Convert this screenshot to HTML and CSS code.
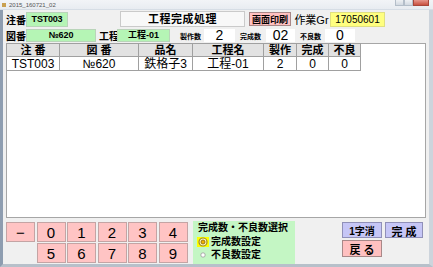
FILE: index.html
```html
<!DOCTYPE html>
<html lang="ja">
<head>
  <meta charset="UTF-8">
  <title>工程完成処理</title>
  <link rel="stylesheet" href="styles.css">
</head>
<body>
<div class="window">
  <div class="titlebar">
    <span class="appicon"></span>
    <span class="caption">2015_160721_02</span>
    <div class="controls">
      <span class="ctl"></span><span class="ctl"></span><span class="ctl close"></span>
    </div>
  </div>

  <div class="main">
    <div class="row row-top">
      <span class="lbl lbl-first">注番</span>
      <span class="box green order">TST003</span>
      <span class="heading">工程完成処理</span>
      <button class="btn pink print">画面印刷</button>
      <span class="lbl group">作業Gr</span>
      <span class="box yellow">17050601</span>
    </div>

    <div class="row row-sub">
      <span class="lbl lbl-first">図番</span>
      <span class="box green drawing">№620</span>
      <span class="lbl lbl-proc">工程</span>
      <span class="box green proc">工程-01</span>
      <span class="lbl small made">製作数</span>
      <span class="num n-made">2</span>
      <span class="lbl small done">完成数</span>
      <span class="num n-done">02</span>
      <span class="lbl small bad">不良数</span>
      <span class="num n-bad">0</span>
    </div>

    <div class="grid">
      <table>
        <colgroup>
          <col class="c1"><col class="c2"><col class="c3"><col class="c4">
          <col class="c5"><col class="c6"><col class="c7">
        </colgroup>
        <tr>
          <th>注 番</th><th>図 番</th><th>品名</th><th>工程名</th><th>製作</th><th>完成</th><th>不良</th>
        </tr>
        <tr>
          <td>TST003</td><td>№620</td><td>鉄格子3</td><td>工程-01</td><td>2</td><td>0</td><td>0</td>
        </tr>
      </table>
    </div>

    <div class="bottom">
      <div class="keypad">
        <button class="key">−</button>
        <button class="key">0</button>
        <button class="key">1</button>
        <button class="key">2</button>
        <button class="key">3</button>
        <button class="key">4</button>
        <span class="blank"></span>
        <button class="key">5</button>
        <button class="key">6</button>
        <button class="key">7</button>
        <button class="key">8</button>
        <button class="key">9</button>
      </div>

      <div class="choice">
        <div class="choice-title">完成数・不良数選択</div>
        <label class="opt">
          <span class="radio on"><svg width="10" height="10" viewBox="0 0 10 10"><circle cx="5" cy="5" r="4" fill="#fff8c0" stroke="#a08a20" stroke-width="1.2"/><circle cx="5" cy="5" r="2" fill="#f0b000" stroke="#806010" stroke-width="0.8"/></svg></span>
          完成数設定
        </label>
        <label class="opt">
          <span class="radio"><svg width="6" height="6" viewBox="0 0 6 6"><circle cx="3" cy="3" r="2.2" fill="#fff" stroke="#9a9a9a" stroke-width="0.8"/></svg></span>
          不良数設定
        </label>
      </div>

      <div class="actions">
        <button class="btn violet">1字消</button>
        <button class="btn violet wide">完 成</button>
        <button class="btn pink wide">戻 る</button>
      </div>
    </div>
  </div>
</div>
</body>
</html>
```

FILE: styles.css
```css
* {
  box-sizing: border-box;
}

html, body {
  margin: 0;
  padding: 0;
}

body {
  width: 433px;
  height: 267px;
  overflow: hidden;
  font-family: "Liberation Sans", "DejaVu Sans", "Noto Sans CJK JP", sans-serif;
  background: #f0f0f0;
  color: #000;
}

.window {
  width: 433px;
  height: 267px;
  display: flex;
  flex-direction: column;
}

/* title bar */
.titlebar {
  height: 10px;
  display: flex;
  align-items: center;
  background: linear-gradient(to bottom, #f2f4f7, #e8ecf1);
  border-bottom: 1px solid #d6dde5;
  padding-left: 2px;
}

.appicon {
  width: 4px;
  height: 4px;
  background: #c9a050;
  margin-right: 3px;
}

.caption {
  font-size: 6px;
  color: #555;
  line-height: 8px;
}

.controls {
  margin-left: auto;
  display: flex;
  align-self: flex-start;
  margin-right: 4px;
}

.ctl {
  width: 9px;
  height: 6px;
  background: linear-gradient(#eef1f4, #d2d9e1);
  border: 1px solid #b4bec9;
  border-top: none;
}

.ctl.close {
  width: 16px;
  background: linear-gradient(#e6968c, #c8503f);
  border-color: #a8463a;
}

/* main area */
.main {
  flex: 1;
  display: flex;
  flex-direction: column;
  border-left: 3px solid #8e9db0;
  border-right: 4px solid #cdd4dc;
  border-bottom: 3px solid #b7c0ca;
  padding: 1px 2px 0 3px;
}

.row {
  display: flex;
  align-items: center;
}

.row-top {
  height: 16px;
}

.row-sub {
  height: 13px;
  margin-top: 2px;
}

.lbl {
  font-weight: bold;
  font-size: 10px;
  white-space: nowrap;
}

.lbl-first {
  width: 20px;
}

.box {
  height: 15px;
  line-height: 13px;
  text-align: center;
  font-size: 9px;
  font-weight: bold;
  border: 1px solid #b9d4b9;
}

.green {
  background: #b5f5b5;
}

.yellow {
  background: #ffff80;
  border-color: #e0e080;
  width: 55px;
  font-weight: normal;
  font-size: 10px;
}

.order {
  width: 42px;
  letter-spacing: -0.2px;
}

.heading {
  margin-left: 52px;
  width: 125px;
  height: 16px;
  line-height: 14px;
  background: #f8f8f8;
  border: 1px solid #cacaca;
  text-align: center;
  font-size: 11px;
  font-weight: bold;
  letter-spacing: 0.5px;
}

.btn {
  font-family: inherit;
  font-weight: bold;
  padding: 0;
  color: #000;
  cursor: pointer;
}

.pink {
  background: #ffc0c0;
  border: 1px solid #a88888;
}

.violet {
  background: #c6c6f6;
  border: 1px solid #9090b8;
}

.print {
  margin-left: 4px;
  width: 42px;
  height: 14px;
  font-size: 9px;
}

.group {
  width: 37px;
  margin-left: 2px;
  text-align: center;
  font-size: 11px;
  font-weight: normal;
}

.row-sub .box {
  height: 13px;
  line-height: 11px;
}

.drawing {
  width: 70px;
}

.lbl-proc {
  width: 21px;
  padding-left: 3px;
}

.proc {
  width: 53px;
}

.small {
  font-size: 7px;
  width: 22px;
}

.made {
  margin-left: 10px;
}

.done,
.bad {
  margin-left: 5px;
}

.num {
  height: 13px;
  line-height: 13px;
  background: #fff;
  text-align: center;
  font-size: 14px;
}

.n-made {
  width: 31px;
  margin-left: 2px;
}

.n-done {
  width: 29px;
  margin-left: 4px;
}

.n-bad {
  width: 30px;
  margin-left: 3px;
}

/* result grid */
.grid {
  flex: 1;
  margin-top: 1px;
  background: #fff;
  border: 1px solid #a6a6a6;
  margin-right: 1px;
}

.grid table {
  border-collapse: collapse;
  table-layout: fixed;
  margin: -1px 0 0 -1px;
}

.c1 { width: 53px; }
.c2 { width: 79px; }
.c3 { width: 54px; }
.c4 { width: 71px; }
.c5 { width: 33px; }
.c6 { width: 32px; }
.c7 { width: 32px; }

.grid th,
.grid td {
  border: 1px solid #a0a0a0;
  padding: 0;
  text-align: center;
  white-space: nowrap;
}

.grid th {
  height: 13px;
  line-height: 11px;
  background: #e2e2e2;
  font-size: 11px;
  font-weight: bold;
}

.grid td {
  height: 14px;
  line-height: 12px;
  font-size: 12px;
}

/* bottom panel */
.bottom {
  height: 46px;
  display: flex;
  align-items: flex-start;
  padding-top: 4px;
}

.keypad {
  display: grid;
  grid-template-columns: repeat(6, 29px);
  grid-template-rows: 20px 20px;
  column-gap: 1.5px;
  row-gap: 1px;
}

.key {
  background: #ffc4c4;
  border: 1px solid #c4a4a4;
  font-family: inherit;
  font-size: 15px;
  padding: 0;
  color: #000;
}

.choice {
  margin-left: 5.5px;
  margin-top: -1px;
  width: 102px;
  height: 43px;
  background: #c4f6c4;
  padding: 1px 3px;
  font-weight: bold;
  font-size: 10px;
}

.choice-title {
  height: 13px;
  line-height: 12px;
  padding-left: 2px;
}

.opt {
  display: flex;
  align-items: center;
  height: 13px;
  line-height: 12px;
}

.radio {
  display: flex;
  align-items: center;
  justify-content: center;
  width: 14px;
  height: 10px;
  margin-right: 1px;
}

.radio.on {
  background: #ffff00;
  width: 12px;
  margin-left: 1px;
  margin-right: 2px;
}

.actions {
  margin-left: 47px;
  display: grid;
  grid-template-columns: 40px 38px;
  grid-template-rows: 16px 17px;
  column-gap: 3px;
  row-gap: 2px;
}

.actions .btn {
  font-size: 10px;
}

.actions .wide {
  font-size: 11px;
}
```
